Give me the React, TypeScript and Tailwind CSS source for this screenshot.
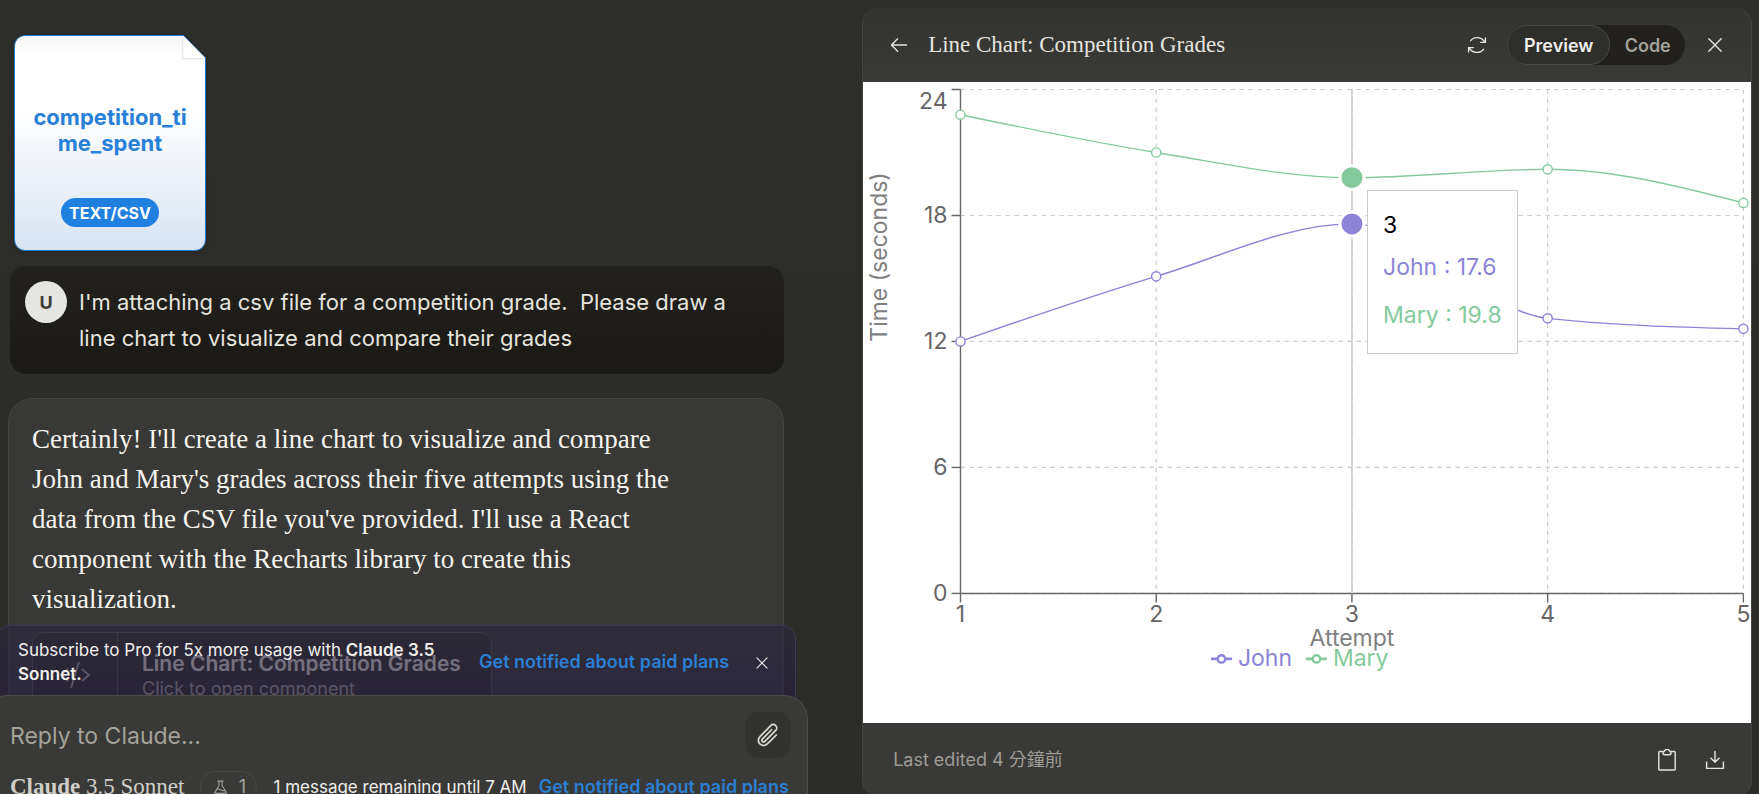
import { useState } from "react";
import { PiArrowLeft, PiFlask, PiPaperclip, PiX } from "react-icons/pi";

const SANS = "font-['Inter','Noto_Sans_CJK_TC',sans-serif]";
const SERIF = "font-['Liberation_Serif','Noto_Sans_CJK_TC',serif]";

// chart canvas and plot area
const WIDTH = 888;
const HEIGHT = 641;
const PLOT = { left: 97.5, right: 880.5, top: 7.5, bottom: 511.5 };
const MAX_Y = 24;
const ACTIVE = 2;

interface Series {
  name: string;
  color: string;
  values: number[];
}

const series: Series[] = [
  { name: "John", color: "#8b84d7", values: [12, 15.1, 17.6, 13.1, 12.6] },
  { name: "Mary", color: "#84ca9d", values: [22.8, 21, 19.8, 20.2, 18.6] },
];

const attempts = [1, 2, 3, 4, 5];
const yTicks = [0, 6, 12, 18, 24];

const xAt = (index: number) => PLOT.left + ((PLOT.right - PLOT.left) / (attempts.length - 1)) * index;
const yAt = (value: number) => PLOT.bottom - ((PLOT.bottom - PLOT.top) / MAX_Y) * value;

// Monotone cubic interpolation, same idea as d3's curveMonotoneX
function monotonePath(values: number[]) {
  const step = xAt(1) - xAt(0);
  const ys = values.map(yAt);
  const slopes = ys.slice(1).map((y, i) => (y - ys[i]) / step);
  const tangents = ys.map((_, i) => {
    if (i === 0 || i === ys.length - 1) return 0;
    const a = slopes[i - 1];
    const b = slopes[i];
    return (Math.sign(a) + Math.sign(b)) * Math.min(Math.abs(a), Math.abs(b), 0.5 * Math.abs((a + b) / 2));
  });
  const last = ys.length - 1;
  tangents[0] = (3 * slopes[0] - tangents[1]) / 2;
  tangents[last] = (3 * slopes[last - 1] - tangents[last - 1]) / 2;

  let d = `M${xAt(0)},${ys[0]}`;
  for (let i = 1; i <= last; i++) {
    const x0 = xAt(i - 1);
    const x1 = xAt(i);
    d += `C${x0 + step / 3},${ys[i - 1] + (tangents[i - 1] * step) / 3} ${x1 - step / 3},${ys[i] - (tangents[i] * step) / 3} ${x1},${ys[i]}`;
  }
  return d;
}

function RefreshIcon() {
  return (
    <svg viewBox="0 0 20 20" className="size-5" fill="none" stroke="currentColor" strokeWidth="1.4">
      <path d="M3.2 6.2A8.6 8.6 0 0 1 17.8 7.2M18.4 2.4v5h-5.2" />
      <path d="M16.8 13.8A8.6 8.6 0 0 1 2.2 12.8M1.6 17.6v-5h5.2" />
    </svg>
  );
}

function ClipboardIcon() {
  return (
    <svg viewBox="0 0 20 22" className="h-[22px] w-5" fill="none" stroke="currentColor" strokeWidth="1.4" strokeLinejoin="round">
      <path d="M6 2.5H2.6a.8.8 0 0 0-.8.8v16.9c0 .5.3.8.8.8h14.8c.5 0 .8-.3.8-.8V3.3a.8.8 0 0 0-.8-.8H14" />
      <path d="M6 2.5v1.4c0 1 .8 1.8 1.8 1.8h4.4c1 0 1.8-.8 1.8-1.8V2.5h-1.2a2.9 2.9 0 0 0-5.6 0z" />
    </svg>
  );
}

function DownloadIcon() {
  return (
    <svg viewBox="0 0 20 20" className="size-5" fill="none" stroke="currentColor" strokeWidth="1.4">
      <path d="M10 1v11M5.6 7.8l4.4 4.4 4.4-4.4M1.6 11.6v6.8h16.8v-6.8" />
    </svg>
  );
}

function FileCard() {
  return (
    <div className="relative flex h-[216px] w-[192px] flex-col items-center text-center">
      <svg viewBox="0 0 192 216" className="absolute inset-0 size-full drop-shadow-sm">
        <defs>
          <linearGradient id="sheet" x1="0" y1="0" x2="0" y2="1">
            <stop offset="0" stopColor="#f6f6f6" />
            <stop offset="0.1" stopColor="#ffffff" />
            <stop offset="0.35" stopColor="#ffffff" />
            <stop offset="1" stopColor="#d8e4f2" />
          </linearGradient>
        </defs>
        <path
          d="M11 .5H169.5L191.5 23V205a10.5 10.5 0 0 1-10.5 10.5H11A10.5 10.5 0 0 1 .5 205V11A10.5 10.5 0 0 1 11 .5z"
          fill="url(#sheet)"
          stroke="#2378cd"
        />
        <path d="M169 1v22.5h22" fill="#fff" stroke="#e4e4e4" strokeWidth="1.5" />
        <path d="M169.5 1L191 23h-21.5z" fill="#fff" />
      </svg>
      <p className="relative mt-[69px] w-[156px] text-[22px] leading-[26px] font-bold break-all text-[#2880d8]">
        competition_time_spent
      </p>
      <span className="relative mt-[42px] flex h-[29px] items-center rounded-full bg-[#2080e0] px-2 text-[16px] font-bold text-white">
        TEXT/CSV
      </span>
    </div>
  );
}

function GradesChart() {
  return (
    <div className="relative bg-white font-['Inter',sans-serif]">
      <svg viewBox={`0 0 ${WIDTH} ${HEIGHT}`} className="block h-auto w-full" role="img" aria-label="Competition grades of John and Mary">
        <g stroke="#cccccc" strokeDasharray="4.5 4.5" strokeWidth="1.2">
          {yTicks.map((tick) => (
            <line key={tick} x1={PLOT.left} x2={PLOT.right} y1={yAt(tick)} y2={yAt(tick)} />
          ))}
          {attempts.map((attempt, i) => (
            <line key={attempt} x1={xAt(i)} x2={xAt(i)} y1={PLOT.top} y2={PLOT.bottom} />
          ))}
        </g>

        <g stroke="#666666" strokeWidth="1.4">
          <line x1={PLOT.left} x2={PLOT.left} y1={PLOT.top} y2={PLOT.bottom} />
          <line x1={PLOT.left} x2={PLOT.right} y1={PLOT.bottom} y2={PLOT.bottom} />
          {yTicks.map((tick) => (
            <line key={tick} x1={PLOT.left - 9} x2={PLOT.left} y1={yAt(tick)} y2={yAt(tick)} />
          ))}
          {attempts.map((attempt, i) => (
            <line key={attempt} x1={xAt(i)} x2={xAt(i)} y1={PLOT.bottom} y2={PLOT.bottom + 9} />
          ))}
        </g>

        <g fill="#666666" fontSize="23">
          {yTicks.map((tick) => (
            <text key={tick} x={PLOT.left - 13} y={tick === MAX_Y ? 27 : yAt(tick) + 8} textAnchor="end">
              {tick}
            </text>
          ))}
          {attempts.map((attempt, i) => (
            <text key={attempt} x={xAt(i)} y={PLOT.bottom + 29} textAnchor="middle">
              {attempt}
            </text>
          ))}
        </g>
        <g fill="#808080" fontSize="23" textAnchor="middle">
          <text x={xAt(2)} y="564">Attempt</text>
          <text transform="translate(24 175) rotate(-90)">Time (seconds)</text>
        </g>

        <line x1={xAt(ACTIVE)} x2={xAt(ACTIVE)} y1={PLOT.top} y2={PLOT.bottom} stroke="#cccccc" strokeWidth="1.5" />

        {series.map((s) => (
          <g key={s.name} stroke={s.color} strokeWidth="1.4">
            <path d={monotonePath(s.values)} fill="none" />
            {s.values.map((value, i) => (
              <circle key={i} cx={xAt(i)} cy={yAt(value)} r="4.6" fill="#ffffff" />
            ))}
          </g>
        ))}
        {series.map((s) => (
          <circle key={s.name} cx={xAt(ACTIVE)} cy={yAt(s.values[ACTIVE])} r="12" fill={s.color} stroke="#ffffff" strokeWidth="3" />
        ))}

        {series.map((s, i) => (
          <g key={s.name} transform={`translate(${348 + i * 95} 577)`}>
            <path d="M0 0h6.5M14.5 0H21" stroke={s.color} strokeWidth="2.6" />
            <circle cx="10.5" cy="0" r="3.7" fill="none" stroke={s.color} strokeWidth="2.4" />
            <text x="27" y="7" fontSize="23" fill={s.color}>
              {s.name}
            </text>
          </g>
        ))}
      </svg>

      <div
        className="absolute w-[151px] border border-[#cccccc] bg-white px-[15px] pt-4 pb-[14px] text-[23px] leading-9 whitespace-nowrap text-black"
        style={{ left: `${((xAt(ACTIVE) + 15) / WIDTH) * 100}%`, top: `${(108 / HEIGHT) * 100}%` }}
      >
        <p>{attempts[ACTIVE]}</p>
        <ul>
          {series.map((s) => (
            <li key={s.name} className="py-[6px]" style={{ color: s.color }}>
              {s.name} : {s.values[ACTIVE]}
            </li>
          ))}
        </ul>
      </div>
    </div>
  );
}

function Composer() {
  const [bannerOpen, setBannerOpen] = useState(true);

  return (
    <div className="absolute inset-x-0 bottom-0">
      {bannerOpen && (
        <div className="-mb-6 -ml-1 mr-[13px] flex h-[94px] items-start rounded-t-[14px] border border-[#3b3858] bg-linear-to-b from-[#2b263c]/60 to-[#241c40]/60 pl-[21px] text-[17px] text-[#f0efec]">
          <p className="w-[430px] pt-[12px] leading-6">
            Subscribe to Pro for 5x more usage with <strong className="font-semibold">Claude 3.5 Sonnet.</strong>
          </p>
          <a href="#plans" className="ml-auto pt-[24px] text-[18px] leading-6 font-semibold whitespace-nowrap text-[#2b7fd4]">
            Get notified about paid plans
          </a>
          <button type="button" aria-label="Dismiss" onClick={() => setBannerOpen(false)} className="mt-[28px] mr-6 ml-6">
            <PiX className="size-[18px]" />
          </button>
        </div>
      )}

      <div className="relative mr-px -ml-4 h-[99px] overflow-hidden rounded-t-[24px] border border-b-0 border-[#4a4a46] bg-[#393937] pt-4 pr-4 pl-[25px]">
        <div className="flex items-start">
          <label htmlFor="reply" className="sr-only">Reply</label>
          <input
            id="reply"
            type="text"
            placeholder="Reply to Claude..."
            className="min-w-0 flex-1 pt-1 text-[23px] leading-10 text-[#f0efec] outline-none placeholder:text-[#a3a29b]"
          />
          <button type="button" aria-label="Attach file" className="flex size-[46px] items-center justify-center rounded-[14px] bg-[#32322f] text-[#d8d7d0]">
            <PiPaperclip className="size-7" />
          </button>
        </div>
        <div className="mt-[13px] flex items-start text-[17px] leading-8 whitespace-nowrap text-[#f0efec]">
          <span className={`text-[23px] text-[#cfcec8] ${SERIF}`}>
            <span className="font-bold">Claude</span> 3.5 Sonnet
          </span>
          <span className="ml-4 flex h-8 w-[57px] items-center justify-center gap-[10px] rounded-full border border-[#474743] text-[18px] text-[#a3a29b]">
            <PiFlask className="size-[17px]" />1
          </span>
          <span className="ml-4">1 message remaining until 7 AM</span>
          <a href="#plans" className="ml-3 text-[18px] font-semibold text-[#2b7fd4]">Get notified about paid plans</a>
        </div>
      </div>
    </div>
  );
}

function Conversation() {
  return (
    <section className="relative w-[46%] shrink-0 overflow-hidden">
      <div className="pr-[25px] pl-2">
        <div className="pt-[35px] pl-[6px]">
          <FileCard />
        </div>

        <div className="mt-[15px] ml-[2px] flex gap-3 rounded-[16px] bg-linear-to-b from-[#22211d] to-[#1a1915] px-[15px] pt-[18px] pb-[18px]">
          <span className="mt-[-3px] flex size-[42px] shrink-0 items-center justify-center rounded-full bg-[#e5e5e2] text-[18px] font-bold text-[#3d3d3a]">
            U
          </span>
          <p className="max-w-[660px] text-[22px] leading-9 whitespace-pre-wrap text-[#e5e4df]">
            {"I'm attaching a csv file for a competition grade.  Please draw a line chart to visualize and compare their grades"}
          </p>
        </div>

        <div className="mt-6 rounded-t-[24px] border border-[#42423f] bg-[#383836] px-[23px] pt-[20px]">
          <p className={`max-w-[660px] text-[27px] leading-10 text-[#f5f4ef] ${SERIF}`}>
            Certainly! I'll create a line chart to visualize and compare John and Mary's grades across their five
            attempts using the data from the CSV file you've provided. I'll use a React component with the Recharts
            library to create this visualization.
          </p>
          <button type="button" className="mt-[13px] flex h-[86px] w-[460px] rounded-[12px] border border-[#55554f] bg-[#2e2e2b] text-left">
            <span className="flex h-full w-[85px] shrink-0 items-center justify-center border-r border-[#55554f] text-[#a3a29b]">
              <svg viewBox="0 0 32 28" className="h-7 w-8" fill="none" stroke="currentColor" strokeWidth="1.8">
                <path d="M9 8L2 14l7 6M23 8l7 6-7 6M20 1l-8 26" />
              </svg>
            </span>
            <span className="pt-[16px] pl-6 whitespace-nowrap">
              <span className="block text-[21px] leading-[30px] font-semibold text-[#e5e4df]">Line Chart: Competition Grades</span>
              <span className="block text-[18px] leading-5 text-[#a3a29b]">Click to open component</span>
            </span>
          </button>
        </div>
      </div>

      <Composer />
    </section>
  );
}

function ArtifactPanel() {
  const [tab, setTab] = useState("Preview");

  return (
    <section className="mt-2 mr-[7px] ml-[53px] min-w-0 flex-1 self-start overflow-hidden rounded-[16px] border-x border-[#42423f] bg-[#393937] text-[#e5e4df]">
      <header className="flex h-[74px] items-center bg-linear-to-b from-[#333330] to-[#393937] px-[25px]">
        <button type="button" aria-label="Back">
          <PiArrowLeft className="size-[22px]" />
        </button>
        <h1 className={`ml-[18px] text-[23px] whitespace-nowrap ${SERIF}`}>Line Chart: Competition Grades</h1>
        <button type="button" aria-label="Refresh" className="ml-auto">
          <RefreshIcon />
        </button>
        <div className="ml-5 flex h-10 w-[178px] rounded-full bg-[#21201c] text-[18px] font-semibold">
          {["Preview", "Code"].map((name) => (
            <button
              key={name}
              type="button"
              onClick={() => setTab(name)}
              className={
                tab === name
                  ? "rounded-full border border-[#4a4a46] bg-[#2e2e2b] px-4 text-[#f0efec]"
                  : "flex-1 px-2 text-[#a3a29b]"
              }
            >
              {name}
            </button>
          ))}
        </div>
        <button type="button" aria-label="Close" className="ml-[19px]">
          <PiX className="size-[22px]" />
        </button>
      </header>

      <GradesChart />

      <footer className="flex h-[74px] items-center gap-7 pr-[26px] pl-[30px]">
        <p className="text-[18px] text-[#9d9c96]">Last edited 4 分鐘前</p>
        <button type="button" aria-label="Copy" className="ml-auto">
          <ClipboardIcon />
        </button>
        <button type="button" aria-label="Download">
          <DownloadIcon />
        </button>
      </footer>
    </section>
  );
}

export default function App() {
  return (
    <main className={`flex h-screen overflow-hidden bg-linear-to-b from-[#2d2d29] to-[#2b2b28] ${SANS}`}>
      <Conversation />
      <ArtifactPanel />
    </main>
  );
}
